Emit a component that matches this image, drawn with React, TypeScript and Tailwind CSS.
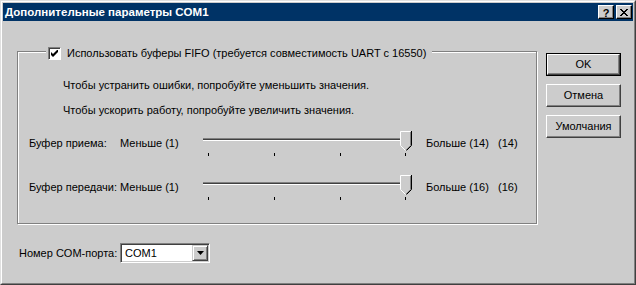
import React from 'react';

const font = "font-['Liberation_Sans',Arial,sans-serif]";

const Thumb = () => (
  <svg width="12" height="20" viewBox="0 0 12 20" className="absolute left-[197px] top-0">
    <polygon points="0,0 12,0 12,14 6.5,20 5.5,20 0,14" fill="#cccccc" />
    <path d="M0.5 14.5V0.5H10.5" stroke="#ffffff" fill="none" />
    <path d="M0.5 14.5L5.5 19.5" stroke="#ffffff" fill="none" />
    <path d="M10.5 1V14.5L6 19" stroke="#808080" fill="none" />
    <path d="M11.5 0V14.5L6.5 19.5" stroke="#000000" fill="none" />
  </svg>
);

const Slider = () => (
  <div className="relative w-[223px] h-[26px]">
    <div className="absolute left-0 top-[7px] w-[209px] flex flex-col">
      <div className="h-px bg-[#808080]" />
      <div className="h-px bg-[#404040]" />
      <div className="h-px bg-white" />
    </div>
    {[5, 71, 137, 202].map((x) => (
      <div key={x} className="absolute top-[22px] h-[3px] w-px bg-black" style={{ left: x }} />
    ))}
    <Thumb />
  </div>
);

const SliderRow = ({ label, max }: { label: string; max: string }) => (
  <div className="flex items-start h-[26px]">
    <div className="w-[91px] mt-[6px] leading-[13px]">{label}</div>
    <div className="w-[83px] mt-[6px] leading-[13px]">Меньше (1)</div>
    <Slider />
    <div className="w-[72px] mt-[6px] leading-[13px]">Больше ({max})</div>
    <div className="mt-[6px] leading-[13px]">({max})</div>
  </div>
);

const Button = ({ children, isDefault = false }: { children: React.ReactNode; isDefault?: boolean }) => (
  <div className={isDefault ? 'border border-black' : ''}>
    <div
      className={
        (isDefault ? 'w-[73px] h-[21px] ' : 'w-[75px] h-[23px] ') +
        'flex items-center justify-center bg-[#cccccc] border border-t-white border-l-white border-r-[#404040] border-b-[#404040] shadow-[inset_-1px_-1px_0_#808080] leading-[13px]'
      }
    >
      {children}
    </div>
  </div>
);

const TitleButton = ({ children }: { children: React.ReactNode }) => (
  <div className="w-[16px] h-[14px] flex items-center justify-center bg-[#cccccc] border border-t-white border-l-white border-r-black border-b-black shadow-[inset_-1px_-1px_0_#808080]">
    {children}
  </div>
);

export default function App() {
  return (
    <div className={`${font} text-[11px] text-black w-[636px] h-[285px] bg-[#cccccc] border border-t-[#e0e0e0] border-l-[#e0e0e0] border-r-[#404040] border-b-[#404040]`}>
      <div className="h-full border border-t-white border-l-white border-r-[#808080] border-b-[#808080] p-px flex flex-col">
        <div className="h-[18px] bg-[#003366] flex items-center justify-between pl-[2px] pr-[1px]">
          <span className="text-white font-bold text-[11.5px] leading-[14px]">Дополнительные параметры COM1</span>
          <div className="flex gap-[2px]">
            <TitleButton>
              <span className="font-bold text-[11px] leading-[10px] mt-[1px]">?</span>
            </TitleButton>
            <TitleButton>
              <svg width="8" height="7" viewBox="0 0 8 7">
                <path d="M0 0L7 7M1 0L8 7M7 0L0 7M8 0L1 7" stroke="black" strokeWidth="1" />
              </svg>
            </TitleButton>
          </div>
        </div>

        <div className="flex pl-[14px] pt-[30px]">
          <div className="w-[520px] flex flex-col">
            <div className="relative h-[173px] border border-[#808080] shadow-[inset_1px_1px_0_#fff,1px_1px_0_#fff]">
              <div className="absolute left-[28px] top-[-6px] h-[15px] flex items-center bg-[#cccccc] pl-[2px] pr-[6px]">
                <div className="w-[13px] h-[13px] bg-white border border-t-[#808080] border-l-[#808080] border-r-white border-b-white shadow-[inset_1px_1px_0_#404040] flex items-center justify-center">
                  <svg width="7" height="7" viewBox="0 0 7 7">
                    <path d="M0 2v3l2 2 5-5V-1L2 4z" fill="black" />
                  </svg>
                </div>
                <span className="ml-[6px] leading-[13px]">Использовать буферы FIFO (требуется совместимость UART с 16550)</span>
              </div>
              <div className="flex flex-col pl-[11px] pt-[27px]">
                <div className="pl-[34px] leading-[13px]">Чтобы устранить ошибки, попробуйте уменьшить значения.</div>
                <div className="pl-[34px] mt-[12px] leading-[13px]">Чтобы ускорить работу, попробуйте увеличить значения.</div>
                <div className="mt-[14px]">
                  <SliderRow label="Буфер приема:" max="14" />
                </div>
                <div className="mt-[18px]">
                  <SliderRow label="Буфер передачи:" max="16" />
                </div>
              </div>
            </div>

            <div className="mt-[19px] flex items-center pl-[2px]">
              <div className="w-[101px] leading-[13px]">Номер COM-порта:</div>
              <div className="w-[90px] h-[20px] bg-white border border-t-[#808080] border-l-[#808080] border-r-white border-b-white shadow-[inset_1px_1px_0_#404040,inset_-1px_-1px_0_#cccccc] flex items-center p-[1px]">
                <span className="flex-1 pl-[3px] leading-[13px]">COM1</span>
                <div className="w-[16px] h-[16px] bg-[#cccccc] border border-t-[#cccccc] border-l-[#cccccc] border-r-[#404040] border-b-[#404040] shadow-[inset_1px_1px_0_#fff,inset_-1px_-1px_0_#808080] flex items-center justify-center">
                  <svg width="7" height="4" viewBox="0 0 7 4">
                    <path d="M0 0H7L3.5 4z" fill="black" />
                  </svg>
                </div>
              </div>
            </div>
          </div>

          <div className="ml-[9px] pt-[2px] flex flex-col gap-[8px]">
            <Button isDefault>OK</Button>
            <Button>Отмена</Button>
            <Button>Умолчания</Button>
          </div>
        </div>
      </div>
    </div>
  );
}
